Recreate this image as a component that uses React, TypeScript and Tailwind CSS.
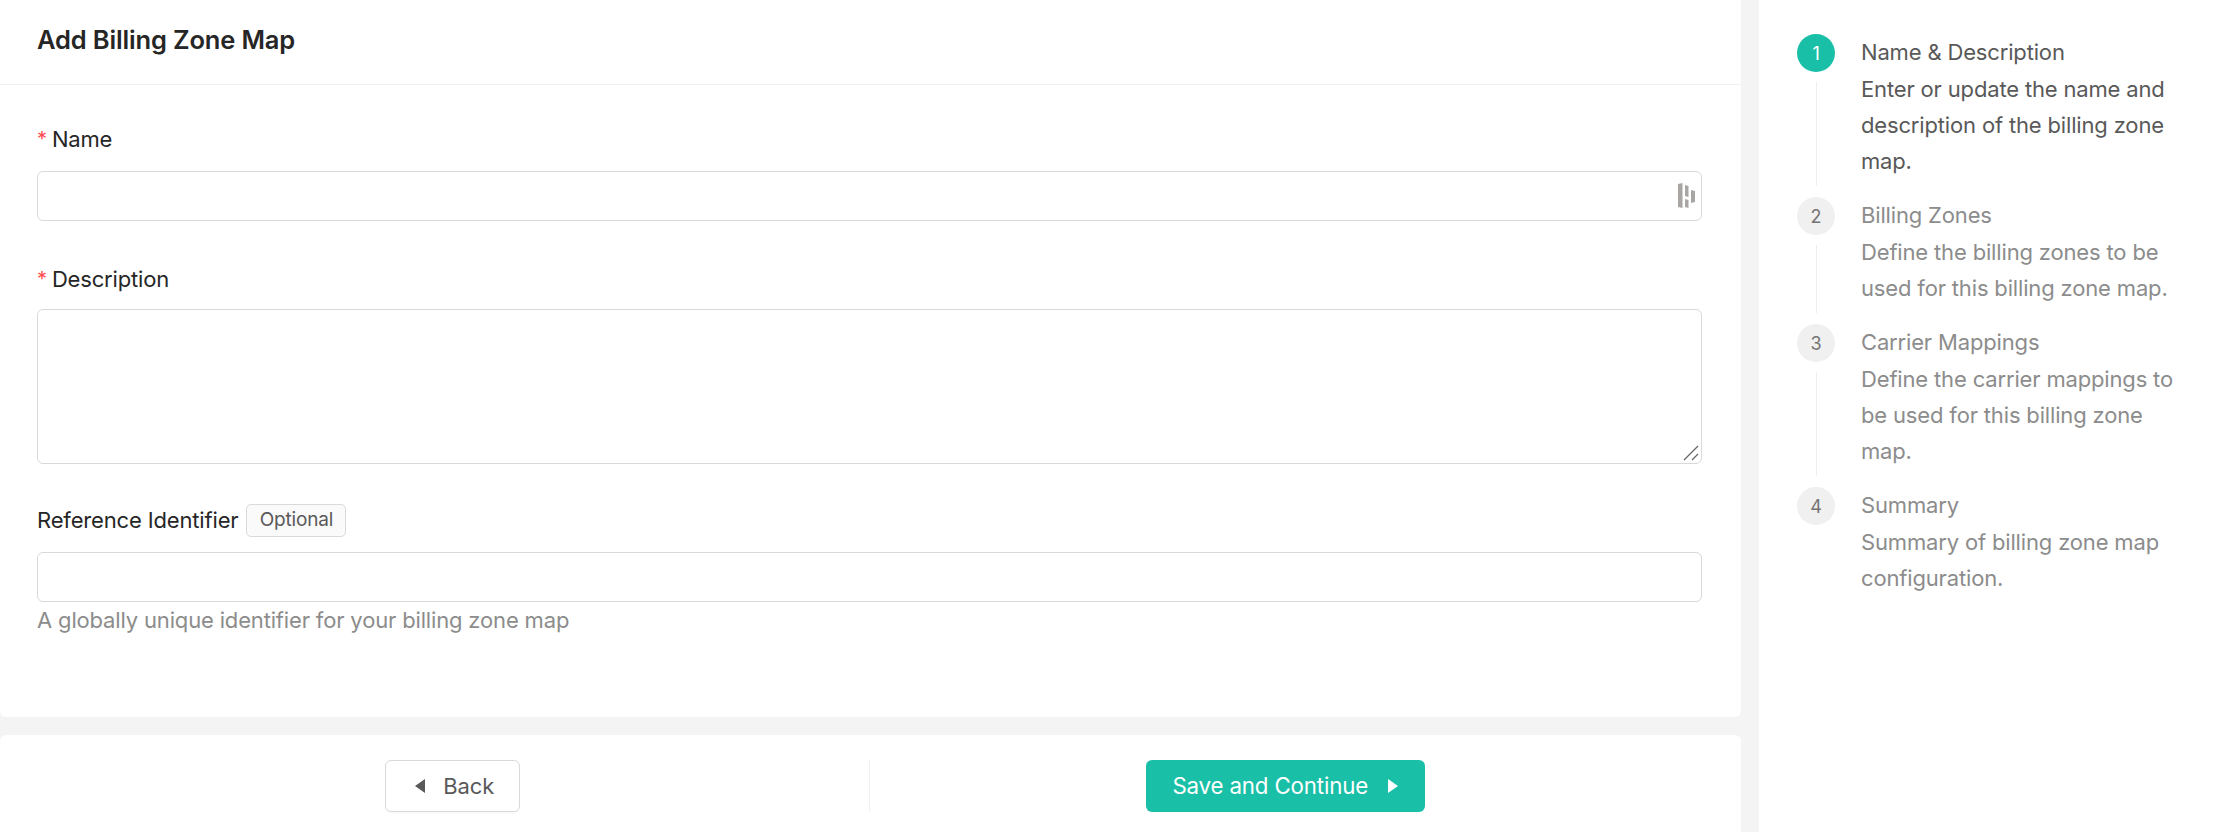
import React from 'react';

const steps = [
  {
    title: 'Name & Description',
    description: 'Enter or update the name and description of the billing zone map.',
  },
  {
    title: 'Billing Zones',
    description: 'Define the billing zones to be used for this billing zone map.',
  },
  {
    title: 'Carrier Mappings',
    description: 'Define the carrier mappings to be used for this billing zone map.',
  },
  {
    title: 'Summary',
    description: 'Summary of billing zone map configuration.',
  },
];

const inputClass =
  'block w-full rounded-[6px] border border-[#d9d9d9] bg-white outline-none';

function RequiredLabel({ children }: { children: React.ReactNode }) {
  return (
    <div className="flex h-[28px] items-center text-[22px] leading-[28px] text-[#262626]">
      <span className="mr-[5px] text-[20px] text-[#ff4d4f]">*</span>
      {children}
    </div>
  );
}

function PasswordManagerIcon() {
  return (
    <svg viewBox="0 0 17 25" className="h-[25px] w-[17px] fill-[#a8a5a3]">
      <path d="M0 1 L4.5 0 L4.5 25 L0 24 Z" />
      <path d="M7 2 L10.5 3 L10.5 14 L7 13 Z" />
      <path d="M7 16 L10.5 17 L10.5 25 L7 24 Z" />
      <path d="M13 7 L17 8 L17 19 L13 20 Z" />
    </svg>
  );
}

function ResizeGrip() {
  return (
    <svg viewBox="0 0 16 16" className="h-[16px] w-[16px] stroke-[#666666]" fill="none" strokeWidth="1.3">
      <path d="M1 15 L15 1" />
      <path d="M9 15 L15 9" />
    </svg>
  );
}

function Stepper() {
  return (
    <aside className="flex-1 bg-white pl-[38px] pr-[24px] pt-[34px]">
      {steps.map((step, index) => {
        const active = index === 0;
        const last = index === steps.length - 1;
        return (
          <div key={step.title} className="flex">
            <div className="mr-[26px] flex w-[38px] flex-none flex-col items-center">
              <div
                className={`flex h-[38px] w-[38px] flex-none items-center justify-center rounded-full text-[18px] ${
                  active ? 'bg-[#1abfa7] text-white' : 'bg-[#f0f0f0] text-[#737373]'
                }`}
              >
                {index + 1}
              </div>
              {!last && <div className="mb-[11px] mt-[10px] w-px flex-1 bg-[#eeeeee]" />}
            </div>
            <div
              className={`flex-1 pb-[18px] text-[22px] leading-[36px] ${
                active ? 'text-[#595959]' : 'text-[#8c8c8c]'
              }`}
            >
              <div>{step.title}</div>
              <div className="mt-px">{step.description}</div>
            </div>
          </div>
        );
      })}
    </aside>
  );
}

export default function App() {
  return (
    <div className="flex h-[832px] w-full bg-[#f4f4f4] font-['Inter',sans-serif] tracking-[-0.01em]">
      <main className="flex w-[1741px] flex-none flex-col">
        <section className="h-[717px] flex-none rounded-b-[6px] bg-white">
          <header className="flex h-[85px] items-center border-b border-[#f0f0f0] px-[37px] pb-[4px] text-[25.5px] font-semibold text-[#262626]">
            Add Billing Zone Map
          </header>

          <div className="pl-[37px] pr-[39px] pt-[40px]">
            <RequiredLabel>Name</RequiredLabel>
            <div className="relative mt-[18px]">
              <input type="text" className={`${inputClass} h-[50px]`} />
              <div className="absolute right-[7px] top-[12px] flex">
                <PasswordManagerIcon />
              </div>
            </div>

            <div className="mt-[44px]">
              <RequiredLabel>Description</RequiredLabel>
            </div>
            <div className="relative mt-[16px]">
              <textarea className={`${inputClass} h-[155px] resize-none`} />
              <div className="pointer-events-none absolute bottom-[3px] right-[3px] flex">
                <ResizeGrip />
              </div>
            </div>

            <div className="mt-[40px] flex h-[33px] items-center">
              <span className="text-[22px] text-[#262626]">Reference Identifier</span>
              <span className="ml-[8px] flex h-[33px] w-[100px] items-center justify-center rounded-[5px] border border-[#d9d9d9] bg-[#fafafa] text-[19px] text-[#595959]">
                Optional
              </span>
            </div>
            <input type="text" className={`${inputClass} mt-[15px] h-[50px]`} />
            <p className="mt-[2px] text-[22px] leading-[32px] text-[#8c8c8c]">
              A globally unique identifier for your billing zone map
            </p>
          </div>
        </section>

        <footer className="mt-[18px] flex h-[97px] flex-none items-start rounded-t-[6px] bg-white pl-[37px] pr-[40px] pt-[25px]">
          <div className="flex flex-1 justify-center">
            <button className="flex h-[52px] w-[135px] items-center justify-center gap-[18px] rounded-[6px] border border-[#d9d9d9] bg-white pl-[4px] text-[22px] text-[#595959] shadow-[0_2px_0_rgba(0,0,0,0.02)]">
              <span className="h-0 w-0 border-y-[7.5px] border-r-[10px] border-y-transparent border-r-[#595959]" />
              Back
            </button>
          </div>
          <div className="h-[52px] w-px bg-[#f0f0f0]" />
          <div className="flex flex-1 justify-center">
            <button className="flex h-[52px] w-[279px] items-center justify-center gap-[20px] rounded-[6px] bg-[#1abfa7] text-[22.3px] text-white">
              Save and Continue
              <span className="h-0 w-0 border-y-[7.5px] border-l-[10px] border-y-transparent border-l-white" />
            </button>
          </div>
        </footer>
      </main>
      <div className="w-[18px] flex-none" />
      <Stepper />
    </div>
  );
}
